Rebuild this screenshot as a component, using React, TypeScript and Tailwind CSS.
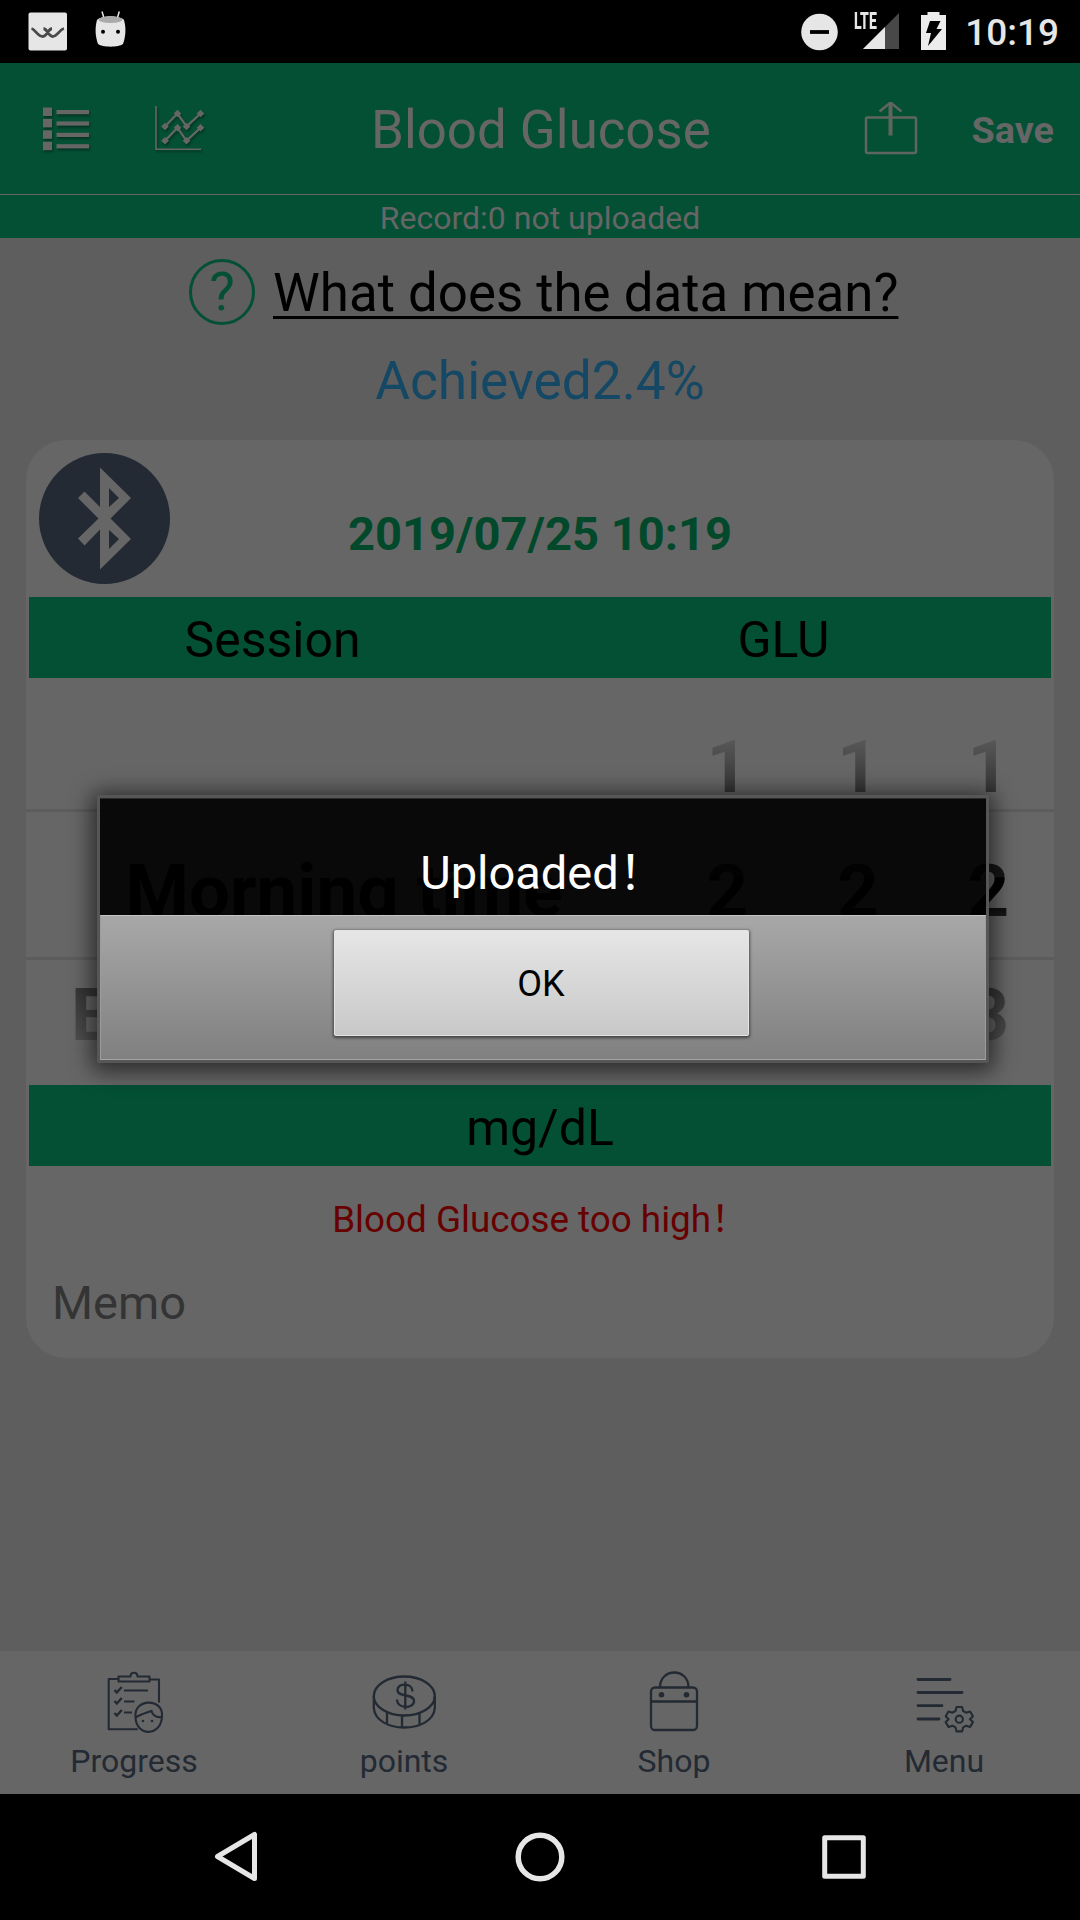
import React from "react";

const INK = "#232a33";

function StatusBar() {
  return (
    <div className="flex h-[63px] shrink-0 items-center bg-black pl-[28px] pr-[21px] text-[#e6e6e6]">
      <svg className="mr-[27px] h-[63px] w-[40px]" viewBox="28 0 40 63">
        <rect x="28.5" y="12.5" width="38.5" height="38" rx="2" fill="#e6e6e6" />
        <path d="M31.5 28.5c4 1 6 8 11.500 8c4 0 5-7.500 9-8M43.500 28.500c4 .5 5 8 9 8c5 0 7-7 11.500-8" fill="none" stroke="#4a4a4a" strokeWidth="2.800" />
      </svg>
      <svg className="h-[63px] w-[32px]" viewBox="95 0 32 63">
        <path d="M102 11.500l1.800 6M119.300 11.500l-1.800 6" stroke="#e6e6e6" strokeWidth="1.500" />
        <path d="M97 20C95 27 95 36 98 44c4 3.500 21 3.500 25 0c3-8 3-17 1-24c-5-5-22-5-27 0z" fill="#e6e6e6" />
        <ellipse cx="110.500" cy="19.800" rx="12" ry="3.200" fill="#aaa" />
        <circle cx="103" cy="31.700" r="2" fill="#000" />
        <circle cx="118" cy="31.700" r="2" fill="#000" />
      </svg>
      <div className="grow" />
      <svg className="mr-[17px] h-[63px] w-[37px]" viewBox="801.500 0 37 63">
        <circle cx="820" cy="32" r="18.300" fill="#e6e6e6" />
        <path d="M810.500 32h19" stroke="#000" strokeWidth="3.800" />
      </svg>
      <div className="relative mr-[22px] h-[63px] w-[44px]">
        <svg className="h-[63px] w-[44px]" viewBox="856 0 44 63">
          <path d="M900 13V49H864z" fill="#484848" />
          <path d="M886 27V49H864z" fill="#e6e6e6" />
        </svg>
        <span className="absolute left-[-1px] top-[10px] origin-left scale-x-[0.61] text-[23px] font-extrabold leading-[23px]">LTE</span>
      </div>
      <svg className="mr-[19px] h-[63px] w-[25px]" viewBox="922 0 25 63">
        <path d="M922 15h6.500v-3h12v3H947v35h-25z" fill="#ececec" />
        <path d="M931 21h10.500l-4 8h5.500l-14 17l3-13h-5z" fill="#000" />
      </svg>
      <span className="relative top-px text-[37px] font-medium leading-[63px]">10:19</span>
    </div>
  );
}

function ListIcon() {
  return (
    <svg className="h-[48px] w-[48px] drop-shadow-[1px_2px_1px_rgba(0,0,0,0.35)]" viewBox="42 104 48 48" fill="#666">
      {[0, 1, 2, 3].map((i) => (
        <g key={i}>
          <rect x="43" y={106.500 + i * 11.400} width="9" height="8.500" />
          <rect x="56.500" y={109 + i * 11.400} width="32.500" height="4.200" />
        </g>
      ))}
    </svg>
  );
}

const CHART_POINTS = [
  [165, 125.500],
  [177.500, 112.500],
  [186.500, 125.500],
  [200.500, 112.500],
];

function ChartIcon() {
  return (
    <svg className="h-[48px] w-[52px] drop-shadow-[1px_2px_1px_rgba(0,0,0,0.35)]" viewBox="154 104 52 48" fill="none" stroke="#666">
      <path d="M156 105V148.300H201" strokeWidth="1.600" />
      {[0, 14.300].map((dy) => (
        <g key={dy} transform={`translate(0 ${dy})`}>
          <path d="M165 125.500L177.500 112.500L186.500 125.500L200.500 112.500" strokeWidth="2.200" />
          {CHART_POINTS.map(([x, y]) => (
            <path key={x} d={`M${x - 3.800} ${y}l3.800-3.800l3.800 3.800l-3.800 3.800z`} fill="#666" stroke="none" />
          ))}
        </g>
      ))}
    </svg>
  );
}

function Header() {
  return (
    <div className="shrink-0 bg-[#045034] text-[#666]">
      <div className="grid h-[132px] grid-cols-[371px_338px_371px] items-center border-b border-[#666]">
        <div className="flex items-center gap-[64px] pl-[42px]">
          <ListIcon />
          <ChartIcon />
        </div>
        <div className="pt-[2px] text-center text-[52.800px] leading-[64px] whitespace-nowrap">Blood Glucose</div>
        <div className="flex items-center justify-end pr-[26px]">
          <svg className="mr-[53px] h-[54px] w-[54px]" viewBox="865 101.500 54 54" fill="none" stroke="#5f665f">
            <rect x="867" y="117" width="50" height="35.500" rx="1.500" strokeWidth="2.500" />
            <path d="M891.500 102v33" strokeWidth="4" />
            <path d="M880.500 111l11-9l11 9" strokeWidth="2.500" />
          </svg>
          <span className="pt-[2px] text-[37.800px] font-bold leading-[44px]">Save</span>
        </div>
      </div>
      <div className="h-[43px] pt-[3px] text-center text-[32px] leading-[41px]">Record:0 not uploaded</div>
    </div>
  );
}

const DIGIT_COLUMNS = [0, 1, 2];

function Picker() {
  return (
    <div className="relative h-[407px] overflow-hidden text-[72.600px] font-bold leading-[124px]">
      <div className="absolute inset-x-0 top-[131px] h-[151px] border-y-[3px] border-[#5c5c5c]" />
      <div className="grid grid-cols-[636px_130.500px_130.500px_130.500px] pt-[28px] text-center">
        <div className="h-[124px]" />
        {DIGIT_COLUMNS.map((c) => (
          <div key={c} className="h-[124px] bg-linear-to-b from-[#5a5a5a] from-25% to-[#303030] to-75% bg-clip-text text-transparent">1</div>
        ))}
        <div className="h-[124px] whitespace-nowrap text-black">Morning time</div>
        {DIGIT_COLUMNS.map((c) => (
          <div key={c} className="h-[124px] bg-linear-to-b from-[#161616] from-38% via-black via-39% to-[#1a1a1a] to-70% bg-clip-text text-transparent">2</div>
        ))}
        <div className="h-[124px] whitespace-nowrap bg-linear-to-b from-[#363636] from-28% to-[#505050] to-72% bg-clip-text text-transparent">Before breakfast</div>
        {DIGIT_COLUMNS.map((c) => (
          <div key={c} className="h-[124px] bg-linear-to-b from-[#363636] from-28% to-[#505050] to-72% bg-clip-text text-transparent">3</div>
        ))}
      </div>
    </div>
  );
}

function BluetoothIcon() {
  return (
    <svg className="absolute left-[13px] top-[13px] h-[131px] w-[131px]" viewBox="39 453 131 131">
      <circle cx="104.500" cy="518.500" r="65.500" fill={INK} />
      <path
        d="M100 467.500L131 498L110.500 518.500L131 539L100 569.500V529.500L84.500 545.500L78 538.500L98.500 518.500L78 498L84.500 491.500L100 507zM109 488V507L119 498zM109 530V549L119 539z"
        fill="#666"
        fillRule="evenodd"
      />
    </svg>
  );
}

function RecordCard() {
  return (
    <div className="mx-[26px] h-[918px] rounded-[40px] bg-[#666]">
      <div className="relative h-[157px]">
        <BluetoothIcon />
        <div className="pt-[66px] text-center text-[47.100px] font-bold leading-[56px] text-[#02482b]">2019/07/25 10:19</div>
      </div>
      <div className="mx-[3px] grid h-[81px] grid-cols-[487px_535px] bg-[#045034] pt-[5px] text-center text-[50px] leading-[76px] text-black">
        <span>Session</span>
        <span>GLU</span>
      </div>
      <Picker />
      <div className="mx-[3px] h-[81px] bg-[#045034] pt-[5px] text-center text-[50px] leading-[76px] text-black">mg/dL</div>
      <div className="pt-[33px] text-center text-[36.800px] leading-[42px] text-[#670000]">Blood Glucose too high！</div>
      <div className="pl-[26px] pt-[35px] text-[47px] leading-[54px] text-[#343434]">Memo</div>
    </div>
  );
}

function ClipboardIcon() {
  return (
    <svg className="h-[66px] w-[60px]" viewBox="104 1669 60 66" fill="none" stroke={INK} strokeWidth="2.100">
      <path d="M118 1679h-9.300v50.300h29M150 1679.500h9v23M118.500 1676.500h12c0-5 7-5 7 0h12v5h-31z" strokeLinejoin="round" />
      <path d="M124 1690.500h24M124 1701.500h10.500M124 1712.500h8" />
      <path d="M114.500 1690l2.300 2.500l5-5.500M114.500 1701l2.300 2.500l5-5.500M114.500 1713l2.300 2.500l5-5.500" strokeWidth="2.400" />
      <path d="M135.500 1717c-2-19 28-19 26.500-1c-.5 21-26 21-26.500 1zM136 1717.500c4-3 10-4.500 15.500-6.500c1.500 5 5 6.500 9.500 6" />
      <circle cx="143" cy="1721" r="1.300" fill={INK} stroke="none" />
      <circle cx="152" cy="1721" r="1.300" fill={INK} stroke="none" />
    </svg>
  );
}

function CoinIcon() {
  return (
    <svg className="h-[66px] w-[66px]" viewBox="371 1669 66 66" fill="none" stroke={INK} strokeWidth="2.300">
      <ellipse cx="404.300" cy="1696" rx="30.500" ry="19.500" />
      <path d="M373.800 1696v12c2 26 59 26 61 0v-12M387 1712.500v12M402 1716v12M419.500 1713v11" />
      <path d="M412.500 1691.500c0-9-15-9-15-1.500c0 8 16.500 3 16.500 11c0 8-17 8-17-1.500M405.300 1681.500v28" />
    </svg>
  );
}

function BagIcon() {
  return (
    <svg className="h-[66px] w-[60px]" viewBox="644 1669 60 66" fill="none" stroke={INK} strokeWidth="2.300">
      <rect x="651" y="1687.500" width="46" height="42.500" rx="4" />
      <path d="M651 1701.500h46M660 1687.500c0-20 28.500-20 28.500 0" />
      <circle cx="661.500" cy="1694.700" r="2.800" fill={INK} stroke="none" />
      <circle cx="686.500" cy="1694.700" r="2.800" fill={INK} stroke="none" />
    </svg>
  );
}

function MenuGearIcon() {
  return (
    <svg className="h-[66px] w-[60px]" viewBox="915 1669 60 66" fill="none" stroke={INK} strokeWidth="2.800" strokeLinecap="round">
      <path d="M919 1679.500h32M919 1692.500h44M919 1705.700h24M919 1719h21" />
      <g strokeWidth="2.100" strokeLinejoin="round">
        <circle cx="960.300" cy="1719.200" r="3.600" />
        <path d="M957.500 1707h5.600l1 4l3 1.700l4-1.200l2.800 4.800l-2.900 2.900l2.900 2.900l-2.800 4.800l-4-1.200l-3 1.700l-1 4h-5.600l-1-4l-3-1.700l-4 1.200l-2.800-4.800l2.900-2.900l-2.900-2.900l2.800-4.800l4 1.200l3-1.700z" />
      </g>
    </svg>
  );
}

const TABS = [
  { label: "Progress", icon: <ClipboardIcon /> },
  { label: "points", icon: <CoinIcon /> },
  { label: "Shop", icon: <BagIcon /> },
  { label: "Menu", icon: <MenuGearIcon /> },
];

function TabBar() {
  return (
    <div className="grid h-[143px] shrink-0 grid-cols-4 bg-[#666] pt-[18px] text-[#232a33]">
      {TABS.map((tab) => (
        <div key={tab.label} className="flex flex-col items-center pr-[2px]">
          {tab.icon}
          <span className="mt-[6px] text-[32px] leading-[40px]">{tab.label}</span>
        </div>
      ))}
    </div>
  );
}

function SystemNav() {
  return (
    <div className="flex h-[126px] shrink-0 items-center justify-between bg-black px-[211px]">
      <svg className="h-[52px] w-[50px]" viewBox="211 1831 50 52" fill="none" stroke="#e6e6e6" strokeWidth="5" strokeLinejoin="round">
        <path d="M254.500 1834.500v44l-37-22z" />
      </svg>
      <svg className="h-[52px] w-[50px]" viewBox="515 1831 50 52" fill="none" stroke="#e6e6e6" strokeWidth="5.500">
        <circle cx="540" cy="1857" r="21.800" />
      </svg>
      <svg className="h-[52px] w-[50px]" viewBox="819 1831 50 52" fill="none" stroke="#e6e6e6" strokeWidth="5" strokeLinejoin="round">
        <rect x="824.700" y="1837.700" width="38.600" height="38.600" />
      </svg>
    </div>
  );
}

function UploadedDialog() {
  return (
    <div className="absolute left-[97px] top-[795px] flex h-[268px] w-[892px] flex-col rounded-[3px] border-[3px] border-[#565656] shadow-[0_3px_22px_5px_rgba(0,0,0,0.6)]">
      <div className="h-[117px] border-t border-[#2a2a2a] bg-black/91 pt-[46px] text-center text-[47px] leading-[56px] text-white">
        Uploaded！
      </div>
      <div className="flex h-[145px] justify-center border border-t-[#c4c4c4] border-x-[#9c9c9c] border-b-[#a4a4a4] bg-linear-to-b from-[#a8a8a8] to-[#808080] pt-[14px] pr-[4px]">
        <button className="h-[106px] w-[415px] rounded-[2px] border border-[#e4e4e4] bg-linear-to-b from-[#e6e6e6] to-[#c8c8c8] pt-[3px] text-[36px] leading-[101px] text-black shadow-[0_1px_3px_1px_rgba(0,0,0,0.5)]">
          OK
        </button>
      </div>
    </div>
  );
}

export default function App() {
  return (
    <div className="relative flex h-[1920px] w-[1080px] flex-col overflow-hidden bg-[#5e5e5e] font-['Roboto','Noto_Sans_CJK_SC',sans-serif]">
      <StatusBar />
      <Header />
      <div className="grow">
        <div className="flex h-[108px] items-start pl-[189px] pt-[21px]">
          <div className="mr-[18px] flex size-[66px] items-center justify-center rounded-full border-[3px] border-[#045034] text-[54px] leading-[60px] text-[#045034]">?</div>
          <span className="pt-[2px] text-[52.800px] leading-[64px] whitespace-nowrap text-black underline decoration-[3px] underline-offset-[5px]">What does the data mean?</span>
        </div>
        <div className="h-[94px] pt-[3px] text-center text-[53.300px] leading-[64px] text-[#154864]">Achieved2.4%</div>
        <RecordCard />
      </div>
      <TabBar />
      <SystemNav />
      <UploadedDialog />
    </div>
  );
}
